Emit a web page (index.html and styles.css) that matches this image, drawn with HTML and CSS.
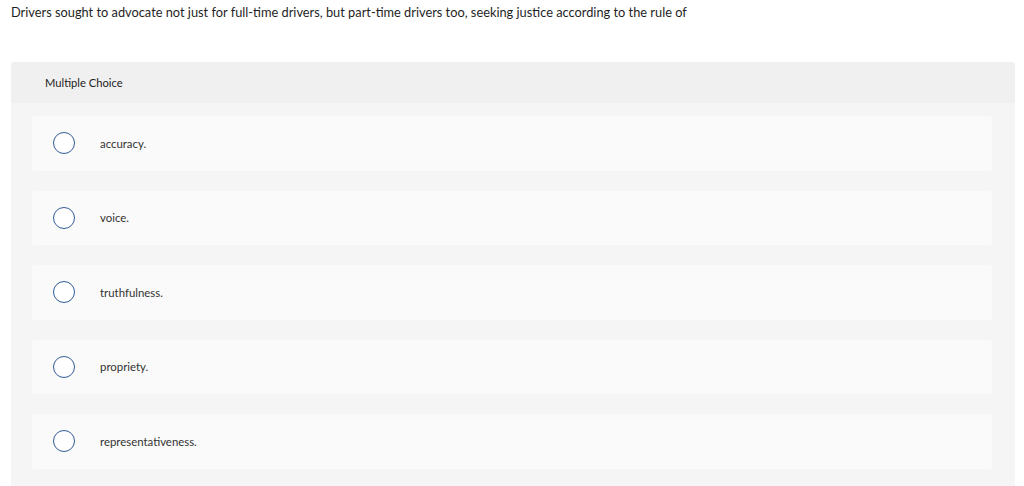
FILE: index.html
```html
<!DOCTYPE html>
<html lang="en">
<head>
<meta charset="utf-8">
<title>Multiple Choice</title>
<link rel="stylesheet" href="styles.css">
</head>
<body>
<p class="question">Drivers sought to advocate not just for full-time drivers, but part-time drivers too, seeking justice according to the rule of</p>
<section class="panel">
  <header class="panel-head">Multiple Choice</header>
  <div class="options">
    <label class="option"><span class="radio"></span><span class="opt-text">accuracy.</span></label>
    <label class="option"><span class="radio"></span><span class="opt-text">voice.</span></label>
    <label class="option"><span class="radio"></span><span class="opt-text">truthfulness.</span></label>
    <label class="option"><span class="radio"></span><span class="opt-text">propriety.</span></label>
    <label class="option"><span class="radio"></span><span class="opt-text">representativeness.</span></label>
  </div>
</section>
</body>
</html>
```
FILE: styles.css
```css
html, body {
  margin: 0;
  padding: 0;
  background: #ffffff;
}
body {
  font-family: "Lato", "Liberation Sans", sans-serif;
  color: #222;
  padding: 0 9px 0 11px;
}
.question {
  margin: 0;
  padding: 4px 0 0 0;
  font-size: 12.8px;
  line-height: 16px;
  color: #1f1f1f;
}
.panel {
  margin-top: 42px;
  background: #f5f5f5;
  border-radius: 3px 3px 0 0;
  padding-bottom: 20px;
}
.panel-head {
  background: #f0f0f0;
  height: 41px;
  display: flex;
  align-items: center;
  padding-left: 34px;
  font-size: 11.2px;
  color: #222;
  border-radius: 3px 3px 0 0;
}
.options {
  display: flex;
  flex-direction: column;
  gap: 20px;
  padding: 13px 23px 0 21px;
}
.option {
  display: flex;
  align-items: center;
  height: 54.5px;
  background: #fafafa;
  border-radius: 3px;
  padding-left: 21px;
}
.radio {
  width: 20px;
  height: 20px;
  border: 1.5px solid #2f5e99;
  border-radius: 50%;
  background: #fff;
  flex: none;
}
.opt-text {
  margin-left: 25px;
  font-size: 11.4px;
  color: #333;
}
```
